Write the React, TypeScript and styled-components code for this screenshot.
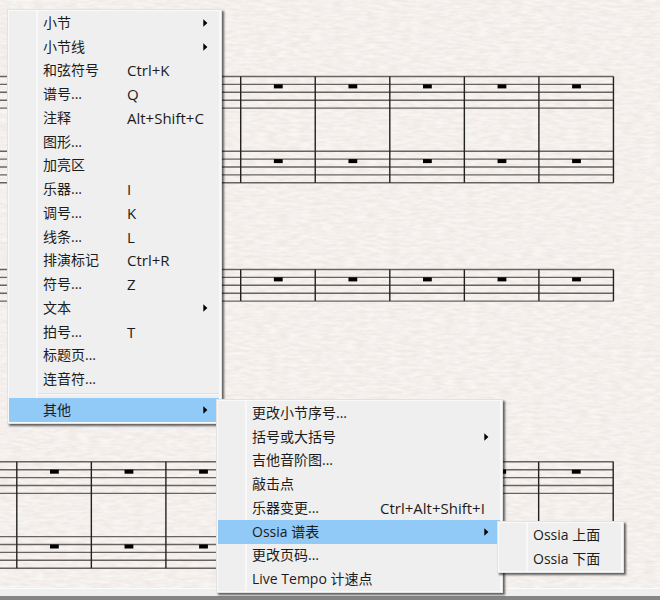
import React from "react";
import styled, { createGlobalStyle, css } from "styled-components";

type Entry = {
  label: string;
  keys?: string;
  arrow?: boolean;
  submenu?: MenuData;
};

type MenuData = {
  name: string;
  width: number;
  labelWidth: number;
  groups: { height: number; entries: Entry[] }[];
};

const ossiaMenu: MenuData = {
  name: "Ossia 谱表",
  width: 127,
  labelWidth: 72,
  groups: [{ height: 48, entries: [{ label: "Ossia 上面" }, { label: "Ossia 下面" }] }],
};

const otherMenu: MenuData = {
  name: "其他",
  width: 287,
  labelWidth: 128,
  groups: [
    {
      height: 190,
      entries: [
        { label: "更改小节序号..." },
        { label: "括号或大括号", arrow: true },
        { label: "吉他音阶图..." },
        { label: "敲击点" },
        { label: "乐器变更...", keys: "Ctrl+Alt+Shift+I" },
        { label: "Ossia 谱表", arrow: true, submenu: ossiaMenu },
        { label: "更改页码..." },
        { label: "Live Tempo 计速点" },
      ],
    },
  ],
};

const createMenu: MenuData = {
  name: "创建",
  width: 215,
  labelWidth: 84,
  groups: [
    {
      height: 380,
      entries: [
        { label: "小节", arrow: true },
        { label: "小节线", arrow: true },
        { label: "和弦符号", keys: "Ctrl+K" },
        { label: "谱号...", keys: "Q" },
        { label: "注释", keys: "Alt+Shift+C" },
        { label: "图形..." },
        { label: "加亮区" },
        { label: "乐器...", keys: "I" },
        { label: "调号...", keys: "K" },
        { label: "线条...", keys: "L" },
        { label: "排演标记", keys: "Ctrl+R" },
        { label: "符号...", keys: "Z" },
        { label: "文本", arrow: true },
        { label: "拍号...", keys: "T" },
        { label: "标题页..." },
        { label: "连音符..." },
      ],
    },
    { height: 24, entries: [{ label: "其他", arrow: true, submenu: otherMenu }] },
  ],
};

const GlobalStyle = createGlobalStyle`
  * { box-sizing: border-box; }
  body {
    margin: 0;
    background: #f4f0ed;
    overflow: hidden;
  }
`;

const Workspace = styled.main`
  position: relative;
  display: flex;
  flex-direction: column;
  min-height: 100vh;
  overflow: hidden;
  font-family: "Open Sans", "Noto Sans CJK SC", sans-serif;
  font-size: 14px;
  color: #1c1c1c;
`;

const Paper = styled.div`
  flex: 1;
`;

const ScoreDrawing = styled.svg`
  display: block;
  width: 100%;
  height: 588px;
`;

const PageEdge = styled.div`
  height: 8px;
  background: #efefef;
  border-top: 1px solid #fbfbfb;
`;

const WindowEdge = styled.div`
  height: 4px;
  background: #858585;
`;

const Panel = styled.div<{ $width: number; $nested?: boolean }>`
  position: absolute;
  z-index: 1;
  width: ${(p) => p.$width}px;
  padding: 1px 2px 1px 1px;
  border: 1px solid #e2e2e2;
  background: #f9f9f9;
  box-shadow: 2px 2px 2px rgba(0, 0, 0, 0.6);
  ${(p) =>
    p.$nested
      ? css`
          top: 1px;
          left: calc(100% - 3px);
        `
      : css`
          top: 9px;
          left: 7px;
        `}
`;

const Body = styled.div`
  background: linear-gradient(90deg, #efefef 27px, #f8f8f8 27px, #f8f8f8 29px, #efefef 29px);
`;

const Divider = styled.hr`
  height: 7px;
  margin: 0 0 0 29px;
  border: 0;
  background: linear-gradient(#efefef 2px, #dedede 2px, #dedede 3px, #f8f8f8 3px, #f8f8f8 4px, #efefef 4px);
`;

const Group = styled.ul<{ $height: number }>`
  display: grid;
  grid-auto-rows: 1fr;
  height: ${(p) => p.$height}px;
  margin: 0;
  padding: 0;
  list-style: none;
`;

const Item = styled.li`
  position: relative;
  display: grid;
`;

const Command = styled.button<{ $open: boolean }>`
  display: flex;
  align-items: center;
  min-height: 0;
  padding: 0 11px 0 34px;
  border: 0;
  background: ${(p) => (p.$open ? "#91c9f7" : "transparent")};
  color: inherit;
  font: inherit;
  line-height: 20px;
  text-align: left;
  white-space: nowrap;
`;

const Label = styled.span<{ $width: number }>`
  flex: 0 0 ${(p) => p.$width}px;
`;

const Shortcut = styled.span`
  flex: 1;
  font-size: 15px;
`;

const Arrow = styled.svg`
  width: 5px;
  height: 8px;
  margin-left: auto;
`;

function Menu({ data, nested }: { data: MenuData; nested?: boolean }) {
  return (
    <Panel $width={data.width} $nested={nested} role="menu" aria-label={data.name}>
      <Body>
        {data.groups.map((group, index) => (
          <React.Fragment key={index}>
            {index > 0 && <Divider />}
            <Group $height={group.height} role="none">
              {group.entries.map((entry) => (
                <Item key={entry.label} role="none">
                  <Command
                    type="button"
                    role="menuitem"
                    $open={Boolean(entry.submenu)}
                    aria-haspopup={entry.arrow ? "menu" : undefined}
                    aria-expanded={entry.arrow ? Boolean(entry.submenu) : undefined}
                  >
                    <Label $width={data.labelWidth}>{entry.label}</Label>
                    {entry.keys && <Shortcut>{entry.keys}</Shortcut>}
                    {entry.arrow && (
                      <Arrow viewBox="0 0 5 8" aria-hidden="true">
                        <path d="M0.3 0.2 4.4 4 0.3 7.8Z" fill="#000" />
                      </Arrow>
                    )}
                  </Command>
                  {entry.submenu && <Menu data={entry.submenu} nested />}
                </Item>
              ))}
            </Group>
          </React.Fragment>
        ))}
      </Body>
    </Panel>
  );
}

const systems = [
  { staves: [76.5, 151.2], firstBar: 240.7, bars: 6 },
  { staves: [269.5], firstBar: 240.7, bars: 6 },
  { staves: [461.8, 536.6], firstBar: 16.8, bars: 9 },
];
const BAR = 74.55;
const LINE_GAP = 7.9;

function Score() {
  return (
    <ScoreDrawing viewBox="0 0 660 588" preserveAspectRatio="xMinYMin slice" aria-hidden="true">
      <defs>
        <filter id="grain" x="0" y="0" width="100%" height="100%" colorInterpolationFilters="sRGB">
          <feTurbulence type="fractalNoise" baseFrequency="0.09 0.36" numOctaves="2" seed="6" />
          <feColorMatrix
            values="0.06 0 0 0 0.926
                    0.09 0 0 0 0.893
                    0.09 0 0 0 0.881
                    0 0 0 0 1"
          />
        </filter>
      </defs>
      <rect width="100%" height="588" filter="url(#grain)" />
      {systems.map((system) => {
        const top = system.staves[0];
        const bottom = system.staves[system.staves.length - 1] + LINE_GAP * 4;
        return (
          <g key={top}>
            {system.staves.map((y) =>
              [0, 1, 2, 3, 4].map((n) => (
                <path
                  key={`${y}-${n}`}
                  d={`M0 ${y + n * LINE_GAP}H613.5`}
                  stroke="#666361"
                  strokeWidth="1.4"
                />
              )),
            )}
            {Array.from({ length: system.bars }, (_, i) => {
              const x = system.firstBar + i * BAR;
              return (
                <g key={i}>
                  <path d={`M${x} ${top}V${bottom}`} stroke="#222" strokeWidth="1.4" />
                  {i < system.bars - 1 &&
                    system.staves.map((y) => (
                      <rect key={y} x={x + 33.2} y={y + 7.9} width="8.8" height="4" fill="#000" />
                    ))}
                </g>
              );
            })}
          </g>
        );
      })}
    </ScoreDrawing>
  );
}

export default function App() {
  return (
    <>
      <GlobalStyle />
      <Workspace>
        <Paper>
          <Score />
        </Paper>
        <PageEdge />
        <WindowEdge />
        <Menu data={createMenu} />
      </Workspace>
    </>
  );
}
